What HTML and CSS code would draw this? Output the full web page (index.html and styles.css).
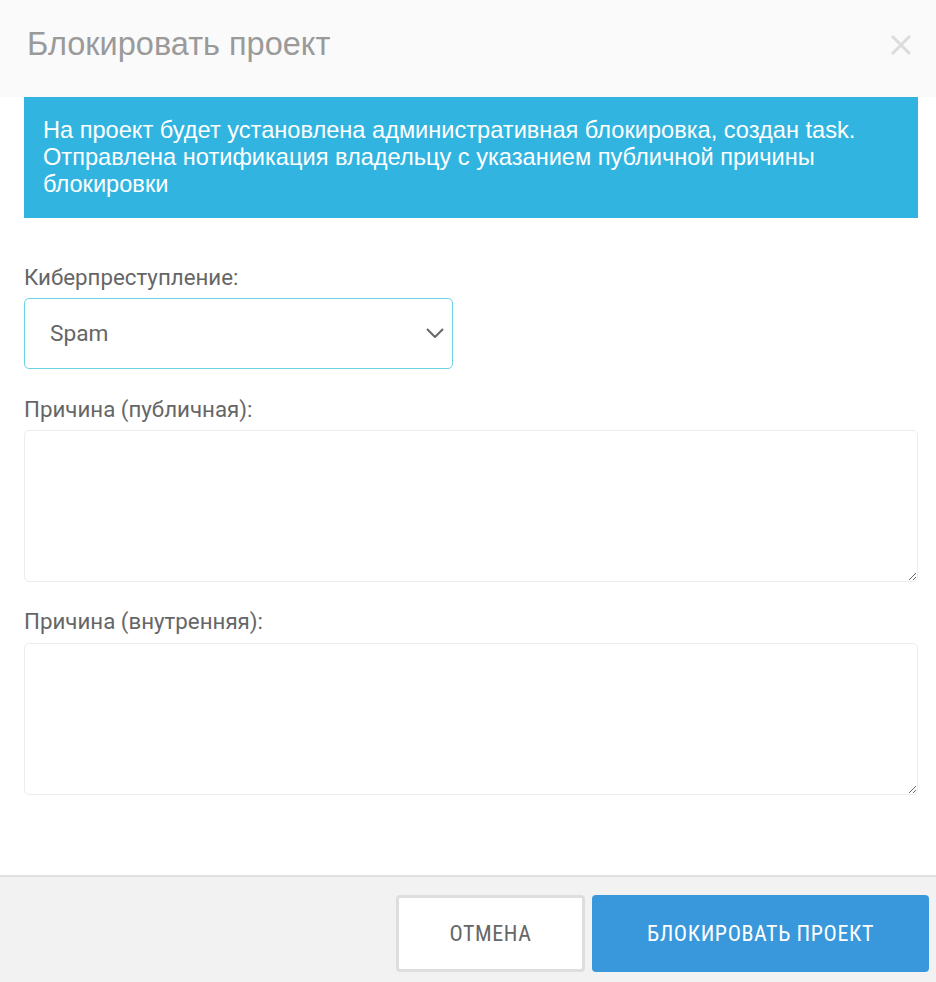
FILE: index.html
```html
<!DOCTYPE html>
<html lang="ru">
<head>
    <meta charset="UTF-8">
    <meta name="viewport" content="width=device-width, initial-scale=1.0">
    <title>Блокировать проект</title>
    <link rel="stylesheet" href="styles.css">
</head>
<body>
    <div class="modal">
        <div class="modal-header">
            <h1 class="modal-title">Блокировать проект</h1>
            <button class="close-btn" type="button" aria-label="Закрыть">
                <svg width="22" height="22" viewBox="0 0 22 22">
                    <path d="M2 2 L20 20 M20 2 L2 20" stroke="#dcdcdc" stroke-width="3"/>
                </svg>
            </button>
        </div>

        <div class="modal-body">
            <div class="alert">
                На проект будет установлена административная блокировка, создан task. Отправлена нотификация владельцу с указанием публичной причины блокировки
            </div>

            <div class="field field-crime">
                <label for="crime">Киберпреступление:</label>
                <div class="select-wrap">
                    <select id="crime">
                        <option>Spam</option>
                        <option>Phishing</option>
                        <option>Malware</option>
                    </select>
                    <svg class="chevron" width="18" height="10" viewBox="0 0 18 10">
                        <path d="M1 1 L9 9 L17 1" fill="none" stroke="#666" stroke-width="2"/>
                    </svg>
                </div>
            </div>

            <div class="field">
                <label for="reason-public">Причина (публичная):</label>
                <textarea id="reason-public"></textarea>
            </div>

            <div class="field">
                <label for="reason-internal">Причина (внутренняя):</label>
                <textarea id="reason-internal"></textarea>
            </div>
        </div>

        <div class="modal-footer">
            <button class="btn btn-cancel" type="button">Отмена</button>
            <button class="btn btn-primary" type="button">Блокировать проект</button>
        </div>
    </div>
</body>
</html>
```

FILE: styles.css
```css
body {
    margin: 0;
    background-color: #fff;
    font-family: Roboto, "Liberation Sans", sans-serif;
}
.modal {
    width: 936px;
    min-height: 982px;
    display: flex;
    flex-direction: column;
}
.modal-header {
    height: 97px;
    background-color: #fafafa;
    display: flex;
    align-items: center;
    justify-content: space-between;
    padding: 0 24px 8px 27px;
    box-sizing: border-box;
}
.modal-title {
    margin: 0;
    font-family: "Liberation Sans", Arial, sans-serif;
    font-weight: normal;
    font-size: 32.5px;
    color: #9a9a9a;
}
.close-btn {
    background: none;
    border: none;
    padding: 0;
    cursor: pointer;
    display: flex;
}
.modal-body {
    padding: 0 18px 80px 24px;
    flex: 1;
}
.alert {
    background-color: #31b5e0;
    color: #fff;
    font-family: "Liberation Sans", Arial, sans-serif;
    font-size: 23.6px;
    line-height: 27px;
    padding: 20px 40px 20px 19px;
}
.field {
    display: flex;
    flex-direction: column;
}
.field label {
    font-size: 22.3px;
    color: #666;
    margin: 27px 0 8px;
    line-height: 26px;
}
.field-crime label {
    margin-top: 46px;
}
.field:last-child label {
    margin-top: 26px;
    margin-bottom: 9px;
}
.select-wrap {
    position: relative;
    width: 429px;
}
select {
    width: 100%;
    height: 71px;
    appearance: none;
    border: 1px solid #6dd2e6;
    border-radius: 5px;
    background: #fff;
    padding: 0 25px;
    font-family: Roboto, sans-serif;
    font-size: 22.7px;
    color: #666;
}
.chevron {
    position: absolute;
    right: 9px;
    top: 30px;
    pointer-events: none;
}
textarea {
    height: 152px;
    box-sizing: border-box;
    border: 1px solid #ececec;
    border-radius: 5px;
    font-family: Roboto, sans-serif;
    font-size: 20px;
    padding: 10px;
}
.modal-footer {
    background-color: #f2f2f2;
    border-top: 2px solid #e0e0e0;
    padding: 18px 7px 10px;
    display: flex;
    justify-content: flex-end;
    gap: 7px;
}
.btn {
    height: 77px;
    font-family: "Roboto Condensed", "DejaVu Sans Condensed", sans-serif;
    font-size: 22px;
    text-transform: uppercase;
    letter-spacing: 0.6px;
    border-radius: 4px;
    cursor: pointer;
}
.btn-cancel {
    width: 189px;
    background-color: #fff;
    border: 3px solid #dedede;
    color: #666;
}
.btn-primary {
    width: 337px;
    background-color: #3898db;
    border: none;
    color: #fff;
}
```
